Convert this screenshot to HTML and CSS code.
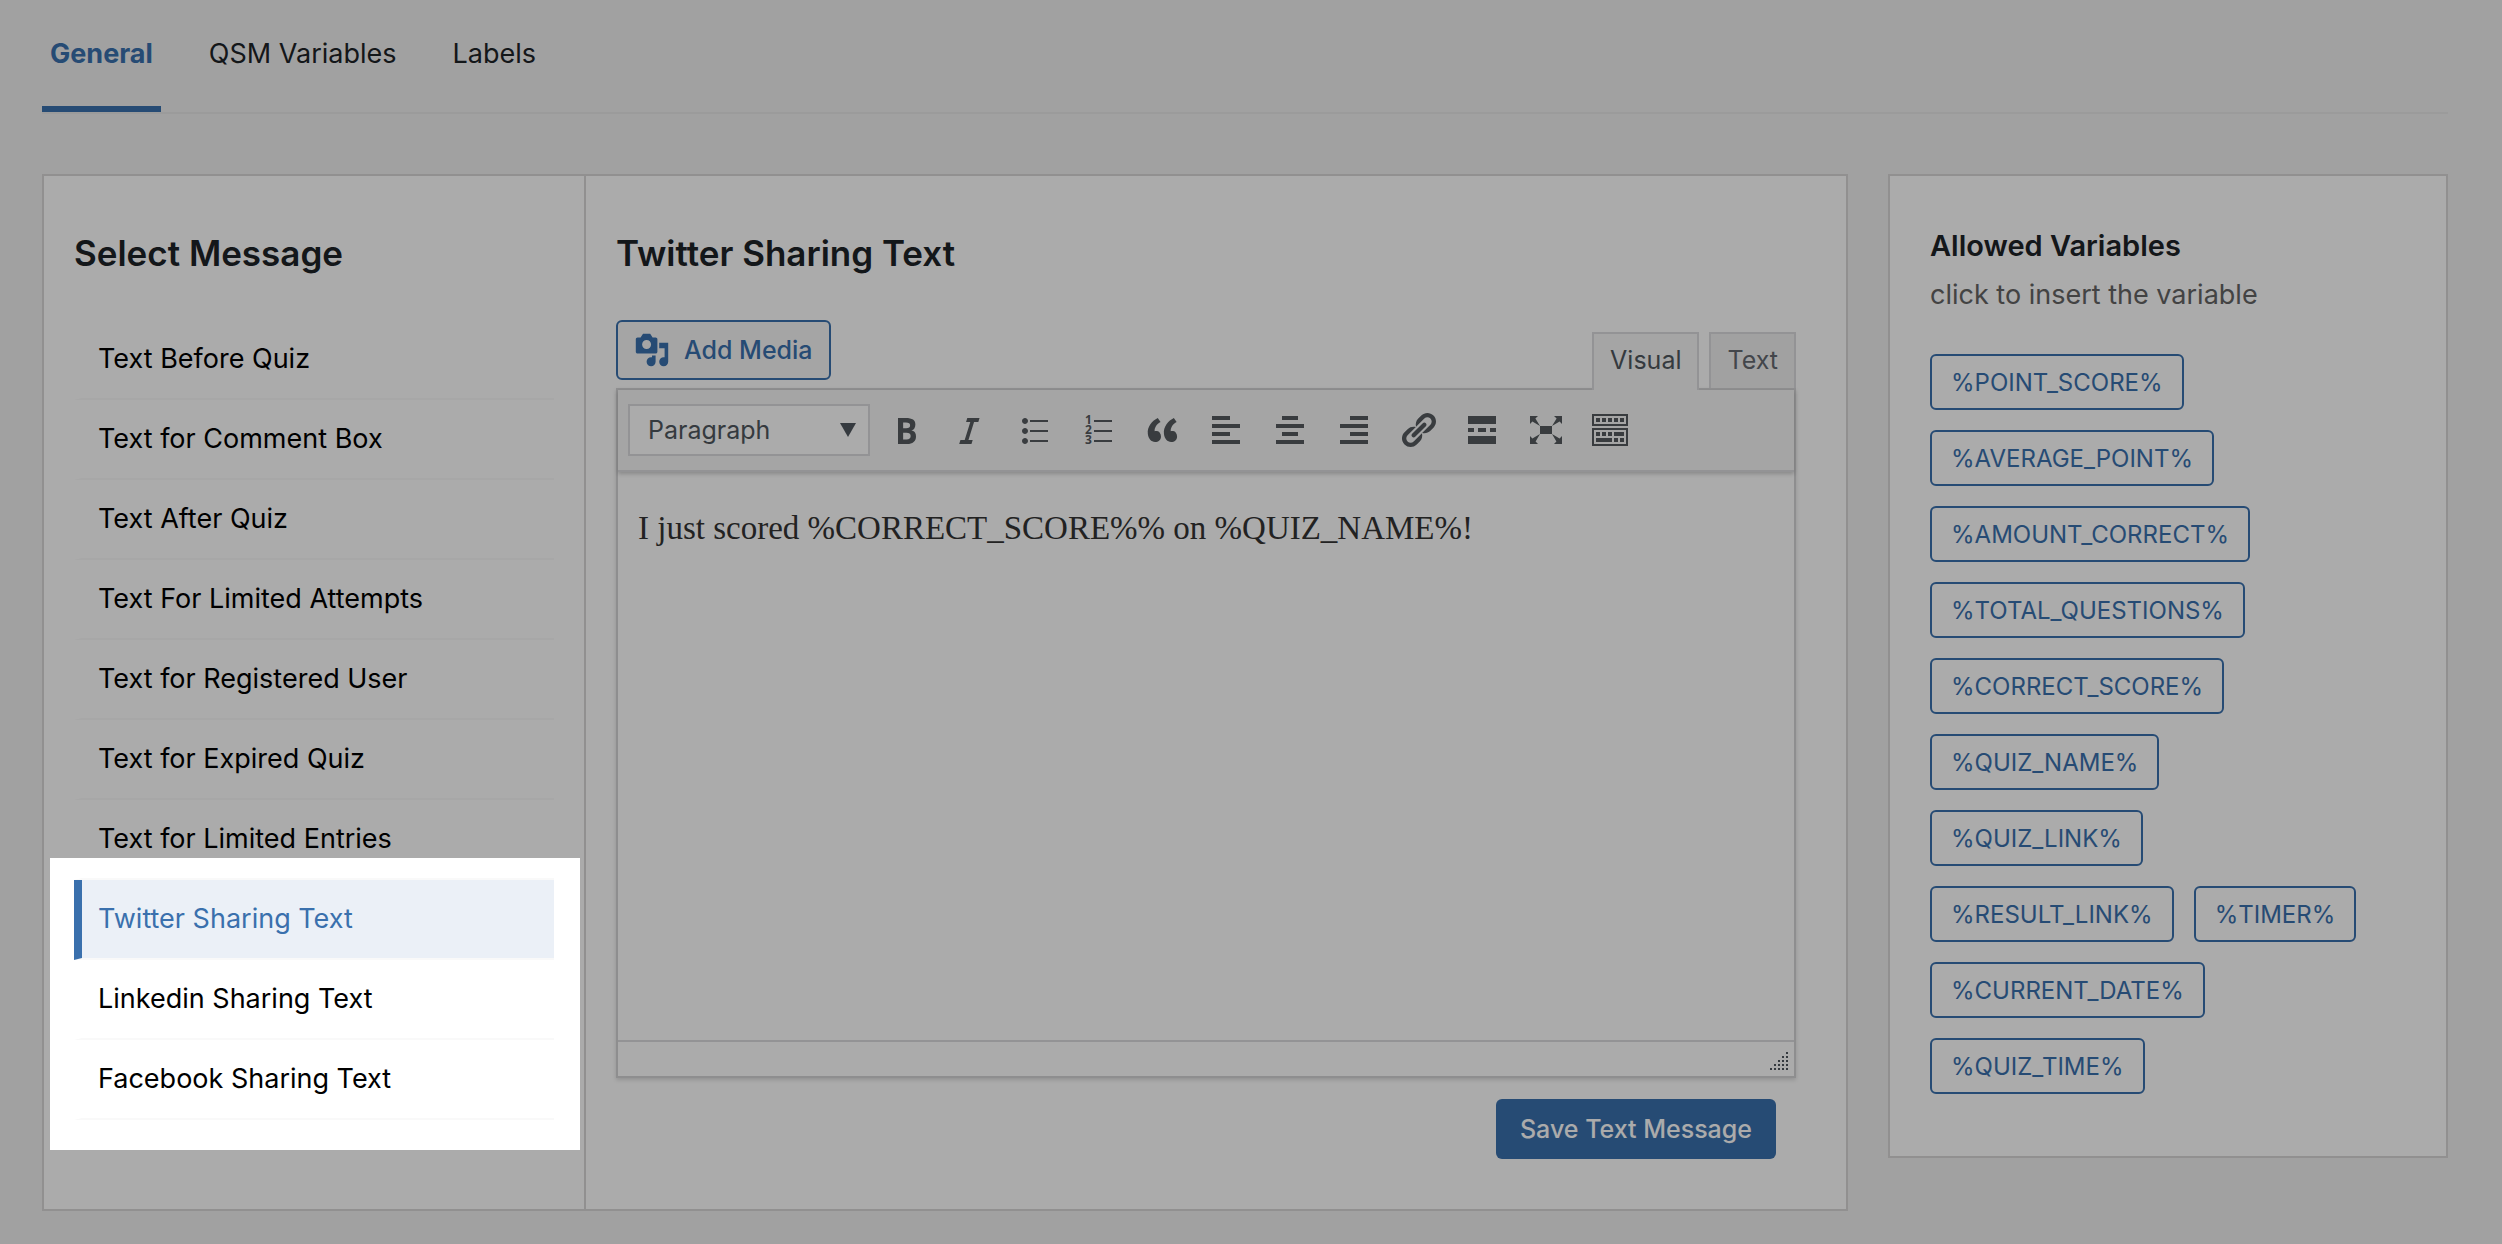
FILE: index.html
```html
<!DOCTYPE html>
<html lang="en">
<head>
<meta charset="utf-8">
<meta name="viewport" content="width=device-width, initial-scale=1">
<title>Text Messages</title>
<link rel="stylesheet" href="styles.css">
</head>
<body>
<div class="page">
  <nav class="tabs" aria-label="Sections">
    <a class="tab tab-active" href="#general">General</a>
    <a class="tab" href="#variables">QSM Variables</a>
    <a class="tab" href="#labels">Labels</a>
  </nav>

  <div class="layout">
    <main class="panel">
      <section class="messages">
        <h2 class="title">Select Message</h2>
        <div class="message-menu">
          <ul class="message-list">
            <li><a class="message" href="#before">Text Before Quiz</a></li>
            <li><a class="message" href="#comment">Text for Comment Box</a></li>
            <li><a class="message" href="#after">Text After Quiz</a></li>
            <li><a class="message" href="#attempts">Text For Limited Attempts</a></li>
            <li><a class="message" href="#registered">Text for Registered User</a></li>
            <li><a class="message" href="#expired">Text for Expired Quiz</a></li>
            <li><a class="message" href="#entries">Text for Limited Entries</a></li>
            <li><a class="message message-active" href="#twitter">Twitter Sharing Text</a></li>
            <li><a class="message" href="#linkedin">Linkedin Sharing Text</a></li>
            <li><a class="message" href="#facebook">Facebook Sharing Text</a></li>
          </ul>
          <div class="spotlight"></div>
        </div>
      </section>

      <section class="editor-pane">
        <h2 class="title">Twitter Sharing Text</h2>
        <div class="editor-head">
          <button class="add-media" type="button">
            <svg class="media-icon" viewBox="0 0 20 20" aria-hidden="true"><path d="M13 11V4c0-.55-.45-1-1-1h-1.670L9 1H5L3.670 3H2c-.55 0-1 .45-1 1v7c0 .55.45 1 1 1h10c.55 0 1-.45 1-1zM7 4.500c1.380 0 2.500 1.120 2.500 2.500S8.380 9.500 7 9.500 4.500 8.380 4.500 7 5.620 4.500 7 4.500zM14 6h5v10.500c0 1.380-1.120 2.500-2.500 2.500S14 17.880 14 16.500s1.120-2.500 2.500-2.500c.17 0 .34.020.5.050V9h-3V6zm-4 8.050V13h2v3.500c0 1.380-1.120 2.500-2.500 2.500S7 17.880 7 16.500 8.120 14 9.500 14c.17 0 .34.020.5.050z"/></svg>
            Add Media
          </button>
          <div class="modes">
            <button class="mode mode-active" type="button">Visual</button>
            <button class="mode" type="button">Text</button>
          </div>
        </div>
        <div class="editor">
          <div class="toolbar">
            <div class="format">
              <select class="format-select" aria-label="Block format">
                <option>Paragraph</option>
              </select>
              <svg class="format-arrow" viewBox="0 0 16 14" aria-hidden="true"><path d="M0 0h16L8 14z"/></svg>
            </div>
            <button class="tool" type="button" aria-label="Bold"><svg viewBox="0 0 20 20"><path d="M6 4v13h4.540c1.370 0 2.460-.33 3.260-1 .8-.66 1.200-1.580 1.200-2.770 0-.84-.17-1.510-.51-2.010s-.9-.85-1.670-1.030v-.09c.57-.1 1.020-.4 1.360-.9s.51-1.130.51-1.910c0-1.140-.39-1.980-1.170-2.500C12.750 4.260 11.500 4 9.780 4H6zm2.570 5.150V6.260h1.360c.73 0 1.270.11 1.610.32.34.22.51.58.51 1.070 0 .54-.16.92-.47 1.150s-.82.35-1.510.35h-1.500zm0 2.190h1.600c1.440 0 2.160.53 2.160 1.610 0 .6-.17 1.050-.51 1.340s-.86.43-1.570.43H8.570v-3.380z"/></svg></button>
            <button class="tool" type="button" aria-label="Italic"><svg viewBox="0 0 20 20"><path d="M14.780 4h-6.130l-.62 2h2.120l-2.800 9H5.220l-.62 2h6.130l.62-2H9.230l2.800-9h2.130z"/></svg></button>
            <button class="tool" type="button" aria-label="Bulleted list"><svg viewBox="0 0 20 20"><path d="M5.500 7C4.670 7 4 6.330 4 5.500 4 4.680 4.670 4 5.500 4 6.320 4 7 4.680 7 5.500 7 6.330 6.320 7 5.500 7zM8 5h9v1H8V5zm-2.500 7c-.83 0-1.500-.67-1.500-1.500C4 9.680 4.670 9 5.500 9c.82 0 1.500.68 1.500 1.500 0 .83-.68 1.500-1.500 1.500zM8 10h9v1H8v-1zm-2.500 7c-.83 0-1.500-.67-1.500-1.500 0-.82.67-1.500 1.500-1.500.82 0 1.500.68 1.500 1.500 0 .83-.68 1.500-1.500 1.500zM8 15h9v1H8v-1z"/></svg></button>
            <button class="tool" type="button" aria-label="Numbered list"><svg viewBox="0 0 20 20"><path d="M8 5h9v1H8zM8 10h9v1H8zM8 15h9v1H8z"/><text class="digit" x="3.500" y="7.200">1</text><text class="digit" x="3.500" y="12.200">2</text><text class="digit" x="3.500" y="17.200">3</text></svg></button>
            <button class="tool" type="button" aria-label="Blockquote"><svg viewBox="0 0 20 20"><path d="M9.490 13.220c0-.74-.2-1.380-.61-1.900-.62-.78-1.830-.88-2.530-.72-.29-1.650 1.110-3.750 2.920-4.650L7.880 4c-2.730 1.300-5.420 4.280-4.960 8.050C3.210 14.430 4.590 16 6.540 16c.85 0 1.560-.25 2.120-.75s.83-1.180.83-2.030zm8.050 0c0-.74-.2-1.380-.61-1.900-.63-.78-1.830-.88-2.530-.72-.29-1.650 1.110-3.750 2.920-4.650L15.930 4c-2.730 1.300-5.410 4.280-4.950 8.050.29 2.380 1.660 3.950 3.610 3.950.85 0 1.560-.25 2.120-.75s.83-1.180.83-2.030z"/></svg></button>
            <button class="tool" type="button" aria-label="Align left"><svg viewBox="0 0 20 20"><path d="M12 5V3H3v2h9zm5 4V7H3v2h14zm-5 4v-2H3v2h9zm5 4v-2H3v2h14z"/></svg></button>
            <button class="tool" type="button" aria-label="Align center"><svg viewBox="0 0 20 20"><path d="M14 5V3H6v2h8zm3 4V7H3v2h14zm-3 4v-2H6v2h8zm3 4v-2H3v2h14z"/></svg></button>
            <button class="tool" type="button" aria-label="Align right"><svg viewBox="0 0 20 20"><path d="M17 5V3H8v2h9zm0 4V7H3v2h14zm0 4v-2H8v2h9zm0 4v-2H3v2h14z"/></svg></button>
            <button class="tool" type="button" aria-label="Insert link"><svg viewBox="0 0 20 20"><path d="M17.740 2.760c1.680 1.690 1.680 4.410 0 6.100l-1.530 1.520c-1.120 1.120-2.700 1.470-4.140 1.090l2.620-2.610.76-.77.76-.76c.84-.84.84-2.200 0-3.040-.84-.85-2.200-.85-3.040 0l-.77.76-3.380 3.380c-.37-1.440-.02-3.020 1.100-4.140l1.520-1.530c1.690-1.680 4.420-1.680 6.100 0zM8.590 13.430l5.340-5.340c.42-.42.42-1.100 0-1.520-.44-.43-1.130-.39-1.530 0l-5.330 5.340c-.42.42-.42 1.100 0 1.520.44.43 1.130.39 1.520 0zm-.76 2.290l4.140-4.150c.38 1.440.03 3.020-1.090 4.140l-1.520 1.530c-1.690 1.680-4.410 1.680-6.100 0-1.680-1.680-1.680-4.420 0-6.100l1.530-1.520c1.120-1.120 2.700-1.470 4.140-1.100l-4.140 4.150c-.85.84-.85 2.200 0 3.050.84.84 2.200.84 3.040 0z"/></svg></button>
            <button class="tool" type="button" aria-label="Read more"><svg viewBox="0 0 20 20"><path d="M17 7V3H3v4h14zM6 11V9H3v2h3zm6 0V9H8v2h4zm5 0V9h-3v2h3zm0 6v-4H3v4h14z"/></svg></button>
            <button class="tool" type="button" aria-label="Fullscreen"><svg viewBox="0 0 20 20"><path d="M7 8h6v4H7zm-5 5v4h4l-1.200-1.200L7 12l-3.800 2.200M14 17h4v-4l-1.200 1.200L13 12l2.200 3.800M14 3l1.300 1.300L13 8l3.800-2.200L18 7V3M6 3H2v4l1.200-1.200L7 8 4.700 4.300"/></svg></button>
            <button class="tool" type="button" aria-label="Toolbar toggle"><svg viewBox="0 0 20 20"><path d="M19 2v6H1V2h18zm-1 5V3H2v4h16zM5 4v2H3V4h2zm3 0v2H6V4h2zm3 0v2H9V4h2zm3 0v2h-2V4h2zm3 0v2h-2V4h2zm2 5v9H1V9h18zm-1 8v-7H2v7h16zM5 11v2H3v-2h2zm3 0v2H6v-2h2zm3 0v2H9v-2h2zm6 0v2h-5v-2h5zm-6 3v2H3v-2h8zm3 0v2h-2v-2h2zm3 0v2h-2v-2h2z"/></svg></button>
          </div>
          <textarea class="content" aria-label="Message text">I just scored %CORRECT_SCORE%% on %QUIZ_NAME%!</textarea>
          <div class="statusbar">
            <svg class="grip" viewBox="0 0 18 18" aria-hidden="true"><path d="M16 0h2v2h-2zM12 4h2v2h-2zM16 4h2v2h-2zM8 8h2v2H8zM12 8h2v2h-2zM16 8h2v2h-2zM4 12h2v2H4zM8 12h2v2H8zM12 12h2v2h-2zM16 12h2v2h-2zM0 16h2v2H0zM4 16h2v2H4zM8 16h2v2H8zM12 16h2v2h-2zM16 16h2v2h-2z"/></svg>
          </div>
        </div>
        <div class="actions"><button class="save" type="button">Save Text Message</button></div>
      </section>
    </main>

    <aside class="variables">
      <h3 class="variables-title">Allowed Variables</h3>
      <p class="variables-hint">click to insert the variable</p>
      <div class="chips">
        <button class="chip" type="button">%POINT_SCORE%</button>
        <button class="chip" type="button">%AVERAGE_POINT%</button>
        <button class="chip" type="button">%AMOUNT_CORRECT%</button>
        <button class="chip" type="button">%TOTAL_QUESTIONS%</button>
        <button class="chip" type="button">%CORRECT_SCORE%</button>
        <button class="chip" type="button">%QUIZ_NAME%</button>
        <button class="chip" type="button">%QUIZ_LINK%</button>
        <button class="chip" type="button">%RESULT_LINK%</button>
        <button class="chip" type="button">%TIMER%</button>
        <button class="chip" type="button">%CURRENT_DATE%</button>
        <button class="chip" type="button">%QUIZ_TIME%</button>
      </div>
    </aside>
  </div>
</div>
</body>
</html>
```
FILE: styles.css
```css
* {
  box-sizing: border-box;
}

body {
  margin: 0;
  background: #f1f1f1;
  color: #1d2327;
  font-family: Inter, "Liberation Sans", sans-serif;
  font-size: 27px;
}

button,
select,
textarea {
  margin: 0;
  font-family: inherit;
}

.page {
  min-height: 100vh;
  padding: 0 54px 32px 42px;
  overflow: hidden;
}

/* Section tabs */
.tabs {
  display: flex;
  gap: 40px;
  border-bottom: 2px solid #e8e8e8;
}

.tab {
  height: 112px;
  padding: 0 8px;
  border-bottom: 6px solid transparent;
  color: #1d2327;
  line-height: 108px;
  text-decoration: none;
}

.tab-active {
  border-bottom-color: #3a70ad;
  color: #3a70ad;
  font-weight: 700;
}

.layout {
  display: flex;
  align-items: flex-start;
  gap: 40px;
  margin-top: 60px;
}

.panel {
  display: flex;
  flex: 1;
  min-width: 0;
  border: 2px solid #d9d7d7;
  background: #fff;
}

.title {
  margin: 0;
  padding: 53px 0 0;
  font-size: 35px;
  font-weight: 600;
  line-height: 48px;
}

/* Message menu */
.messages {
  width: 542px;
  padding: 0 30px 60px;
  border-right: 2px solid #d9d7d7;
}

.message-menu {
  position: relative;
  margin-top: 43px;
}

.message-list {
  margin: 0;
  padding: 0;
  list-style: none;
}

.message {
  display: block;
  border-bottom: 2px solid #f9f9f9;
  border-left: 8px solid transparent;
  padding-left: 16px;
  color: #000;
  line-height: 78px;
  text-decoration: none;
}

.message-active {
  border-left-color: #3a70ad;
  background: #ebf0f7;
  color: #3a70ad;
}

/* Dims everything outside the sharing messages */
.spotlight {
  position: absolute;
  z-index: 10;
  inset: 538px -26px -30px -24px;
  box-shadow: 0 0 0 4000px rgba(0, 0, 0, 0.33);
  pointer-events: none;
}

/* Editor */
.editor-pane {
  flex: 1;
  min-width: 0;
  padding: 0 50px 50px 30px;
}

.editor-head {
  display: flex;
  align-items: flex-end;
  justify-content: space-between;
  margin-top: 43px;
}

.add-media {
  display: flex;
  align-items: center;
  gap: 14px;
  height: 60px;
  margin-bottom: 8px;
  padding: 0 16px;
  border: 2px solid #3a70ad;
  border-radius: 6px;
  background: #f6f7f7;
  color: #3a70ad;
  font-size: 25px;
  font-weight: 500;
}

.media-icon {
  width: 36px;
  height: 36px;
  fill: currentColor;
}

.modes {
  display: flex;
  gap: 10px;
}

.mode {
  height: 56px;
  padding: 0 16px 2px;
  border: 2px solid #dcdcde;
  border-bottom: 0;
  background: #f0f0f1;
  color: #646970;
  font-size: 25px;
}

.mode-active {
  z-index: 1;
  height: 58px;
  margin-bottom: -2px;
  padding-bottom: 4px;
  background: #f6f7f7;
  color: #50575e;
}

.editor {
  border: 2px solid #d4d4d6;
  box-shadow: 0 2px 4px rgba(0, 0, 0, 0.15);
}

.toolbar {
  position: relative;
  display: flex;
  align-items: center;
  gap: 8px;
  height: 82px;
  padding: 0 10px;
  border-bottom: 2px solid #dcdcde;
  background: #f6f7f7;
  box-shadow: 0 2px 4px rgba(0, 0, 0, 0.2);
}

.format {
  display: flex;
  align-items: center;
  width: 242px;
  height: 52px;
  border: 2px solid #dcdcde;
  background: #fff;
}

.format-select {
  flex: 1;
  min-width: 0;
  height: 48px;
  padding: 0 0 0 18px;
  appearance: none;
  border: 0;
  background: transparent;
  color: #50575e;
  font-size: 25px;
}

.format-arrow {
  width: 16px;
  height: 14px;
  margin-right: 12px;
  fill: #50575e;
}

.tool {
  width: 56px;
  height: 48px;
  padding: 4px 8px;
  border: 0;
  background: transparent;
}

.tool svg {
  display: block;
  width: 40px;
  height: 40px;
  fill: #555a5e;
}

.digit {
  font-family: "Open Sans", sans-serif;
  font-size: 6px;
  font-weight: 700;
}

.content {
  display: block;
  width: 100%;
  height: 568px;
  padding: 32px 20px;
  border: 0;
  resize: none;
  background: #fff;
  color: #333;
  font-family: Georgia, "Liberation Serif", serif;
  font-size: 33px;
  line-height: 48px;
}

.statusbar {
  display: flex;
  align-items: flex-end;
  justify-content: flex-end;
  height: 36px;
  padding: 6px;
  border-top: 2px solid #dcdcde;
}

.grip {
  width: 18px;
  height: 18px;
  fill: #50575e;
}

.actions {
  display: flex;
  justify-content: flex-end;
  padding: 21px 20px 0;
}

.save {
  height: 60px;
  padding: 0 24px;
  border: 0;
  border-radius: 6px;
  background: #3a70ad;
  color: #fff;
  font-size: 25px;
  font-weight: 500;
}

/* Variables */
.variables {
  width: 560px;
  padding: 48px 58px 62px 40px;
  border: 2px solid #d9d7d7;
  background: #fff;
}

.variables-title {
  margin: 0;
  font-size: 29px;
  font-weight: 600;
  line-height: 44px;
}

.variables-hint {
  margin: 0 0 32px;
  color: #646464;
  line-height: 54px;
}

.chips {
  display: flex;
  flex-wrap: wrap;
  gap: 20px;
}

.chip {
  height: 56px;
  padding: 0 19px;
  border: 2px solid #3a70ad;
  border-radius: 6px;
  background: #fff;
  color: #3a70ad;
  font-size: 24px;
}
```
